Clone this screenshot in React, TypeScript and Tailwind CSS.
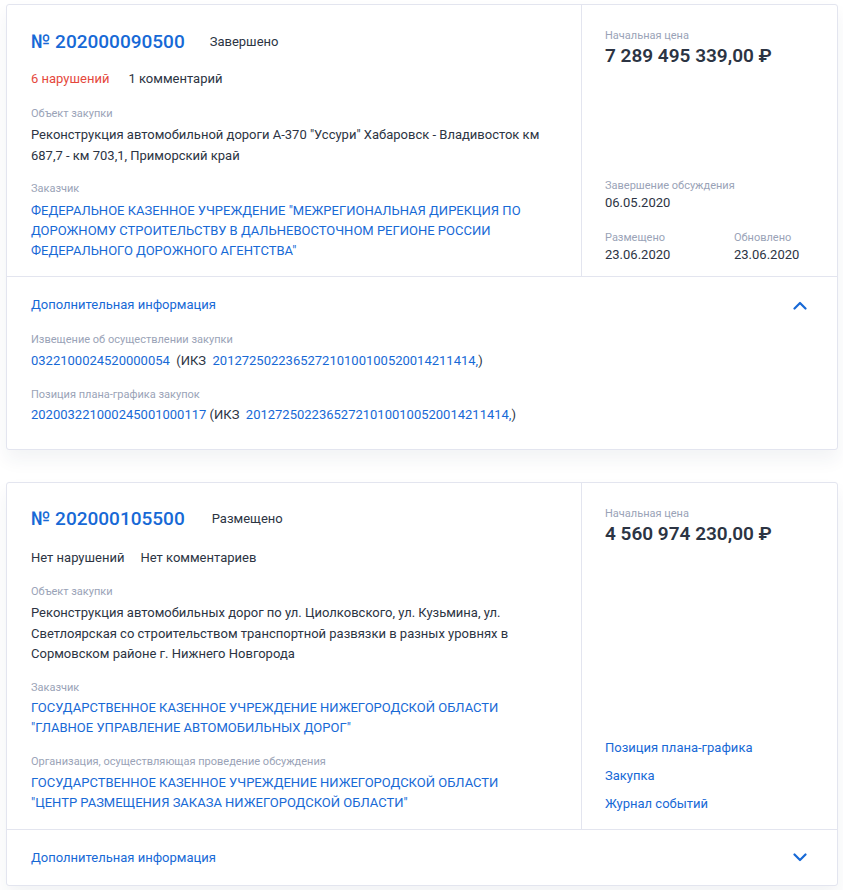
import React from "react";

const BLUE = "text-[#1769d6]";

function Chevron({ up }: { up?: boolean }) {
  return (
    <svg width="14" height="9" viewBox="0 0 14 9" fill="none">
      {up ? (
        <polyline points="1.5,7.5 7,2 12.5,7.5" stroke="#1769d6" strokeWidth="2.2" strokeLinecap="round" strokeLinejoin="round" />
      ) : (
        <polyline points="1.5,1.5 7,7 12.5,1.5" stroke="#1769d6" strokeWidth="2.2" strokeLinecap="round" strokeLinejoin="round" />
      )}
    </svg>
  );
}

function Label({ children, className = "" }: { children: React.ReactNode; className?: string }) {
  return <div className={`text-[11px] leading-[16px] text-[#9aa3b7] ${className}`}>{children}</div>;
}

export default function App() {
  return (
    <div
      className="bg-white min-h-[890px] pt-[4px] pl-[6px] pr-[5px]"
      style={{ fontFamily: "Roboto, 'Noto Sans', Arial, sans-serif" }}
    >
      {/* Card 1 */}
      <div className="border border-[#e3e5ef] rounded-[3px] bg-white shadow-[0_10px_18px_rgba(40,50,90,0.06)]">
        <div className="flex">
          <div className="flex-1 pl-[24px] pr-[38px] pt-[23px] pb-[15px]">
            <div className="flex items-center h-[28px]">
              <span className={`text-[19px] font-medium ${BLUE}`}>№ 202000090500</span>
              <span className="ml-[25px] text-[13px] text-[#2c3443]">Завершено</span>
            </div>
            <div className="mt-[13px] flex h-[20px] items-center text-[13px]">
              <span className="text-[#e5483c]">6 нарушений</span>
              <span className="ml-[19px] text-[#2c3443]">1 комментарий</span>
            </div>
            <Label className="mt-[17px]">Объект закупки</Label>
            <div className="mt-[2px] text-[13px] leading-[21px] text-[#2c3443]">
              Реконструкция автомобильной дороги А-370 "Уссури" Хабаровск - Владивосток км 687,7 - км 703,1, Приморский край
            </div>
            <Label className="mt-[15px]">Заказчик</Label>
            <div className={`mt-[4px] text-[13px] leading-[20px] ${BLUE}`}>
              ФЕДЕРАЛЬНОЕ КАЗЕННОЕ УЧРЕЖДЕНИЕ "МЕЖРЕГИОНАЛЬНАЯ ДИРЕКЦИЯ ПО ДОРОЖНОМУ СТРОИТЕЛЬСТВУ В ДАЛЬНЕВОСТОЧНОМ РЕГИОНЕ РОССИИ ФЕДЕРАЛЬНОГО ДОРОЖНОГО АГЕНТСТВА"
            </div>
          </div>
          <div className="w-[256px] border-l border-[#e3e5ef] pl-[23px] pr-[16px] pt-[23px] pb-[12px] flex flex-col justify-between">
            <div>
              <Label>Начальная цена</Label>
              <div className="text-[19px] leading-[24px] font-semibold text-[#2c3443]">7 289 495 339,00 ₽</div>
            </div>
            <div>
              <Label>Завершение обсуждения</Label>
              <div className="text-[13px] leading-[18px] text-[#2c3443]">06.05.2020</div>
              <div className="mt-[18px] flex">
                <div className="w-[129px]">
                  <Label>Размещено</Label>
                  <div className="text-[13px] leading-[18px] text-[#2c3443]">23.06.2020</div>
                </div>
                <div>
                  <Label>Обновлено</Label>
                  <div className="text-[13px] leading-[18px] text-[#2c3443]">23.06.2020</div>
                </div>
              </div>
            </div>
          </div>
        </div>
        <div className="border-t border-[#e3e5ef] pl-[24px] pr-[30px] pt-[18px] pb-[24px]">
          <div className="flex items-center justify-between h-[20px]">
            <span className={`text-[13px] ${BLUE}`}>Дополнительная информация</span>
            <Chevron up />
          </div>
          <Label className="mt-[17px]">Извещение об осуществлении закупки</Label>
          <div className="mt-[3px] text-[13px] leading-[20px] whitespace-pre text-[#2c3443]">
            <span className={BLUE}>0322100024520000054</span>{"  (ИКЗ  "}
            <span className={BLUE}>201272502236527210100100520014211414,</span>)
          </div>
          <Label className="mt-[16px]">Позиция плана-графика закупок</Label>
          <div className="mt-[2px] text-[13px] leading-[20px] whitespace-pre text-[#2c3443]">
            <span className={BLUE}>202003221000245001000117</span>{" (ИКЗ  "}
            <span className={BLUE}>201272502236527210100100520014211414,</span>)
          </div>
        </div>
      </div>

      {/* Card 2 */}
      <div className="mt-[32px] border border-[#e3e5ef] rounded-[3px] bg-white shadow-[0_10px_18px_rgba(40,50,90,0.06)]">
        <div className="flex">
          <div className="flex-1 pl-[24px] pr-[38px] pt-[22px] pb-[16px]">
            <div className="flex items-center h-[28px]">
              <span className={`text-[19px] font-medium ${BLUE}`}>№ 202000105500</span>
              <span className="ml-[27px] text-[13px] text-[#2c3443]">Размещено</span>
            </div>
            <div className="mt-[15px] flex h-[20px] items-center text-[13px] text-[#2c3443]">
              <span>Нет нарушений</span>
              <span className="ml-[16px]">Нет комментариев</span>
            </div>
            <Label className="mt-[16px]">Объект закупки</Label>
            <div className="mt-[3px] text-[13px] leading-[20.5px] text-[#2c3443]">
              Реконструкция автомобильных дорог по ул. Циолковского, ул. Кузьмина, ул. Светлоярская со строительством транспортной развязки в разных уровнях в Сормовском районе г. Нижнего Новгорода
            </div>
            <Label className="mt-[15px]">Заказчик</Label>
            <div className={`mt-[2px] text-[13px] leading-[20px] ${BLUE}`}>
              ГОСУДАРСТВЕННОЕ КАЗЕННОЕ УЧРЕЖДЕНИЕ НИЖЕГОРОДСКОЙ ОБЛАСТИ "ГЛАВНОЕ УПРАВЛЕНИЕ АВТОМОБИЛЬНЫХ ДОРОГ"
            </div>
            <Label className="mt-[16px]">Организация, осуществляющая проведение обсуждения</Label>
            <div className={`mt-[3px] text-[13px] leading-[20px] ${BLUE}`}>
              ГОСУДАРСТВЕННОЕ КАЗЕННОЕ УЧРЕЖДЕНИЕ НИЖЕГОРОДСКОЙ ОБЛАСТИ "ЦЕНТР РАЗМЕЩЕНИЯ ЗАКАЗА НИЖЕГОРОДСКОЙ ОБЛАСТИ"
            </div>
          </div>
          <div className="w-[256px] border-l border-[#e3e5ef] pl-[23px] pr-[16px] pt-[23px] pb-[15px] flex flex-col justify-between">
            <div>
              <Label>Начальная цена</Label>
              <div className="text-[19px] leading-[24px] font-semibold text-[#2c3443]">4 560 974 230,00 ₽</div>
            </div>
            <div className={`flex flex-col gap-[8px] text-[13px] leading-[20px] ${BLUE}`}>
              <span>Позиция плана-графика</span>
              <span>Закупка</span>
              <span>Журнал событий</span>
            </div>
          </div>
        </div>
        <div className="border-t border-[#e3e5ef] pl-[24px] pr-[30px] pt-[18px] pb-[17px]">
          <div className="flex items-center justify-between h-[20px]">
            <span className={`text-[13px] ${BLUE}`}>Дополнительная информация</span>
            <Chevron />
          </div>
        </div>
      </div>
    </div>
  );
}
